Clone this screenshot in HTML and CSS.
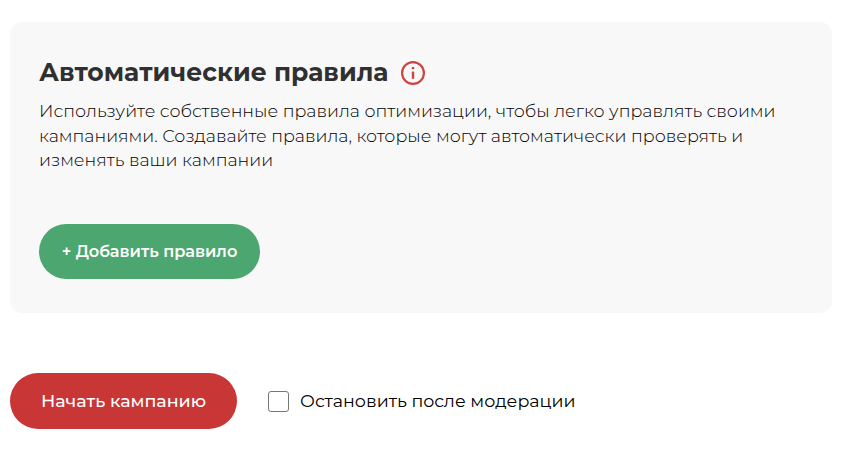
FILE: index.html
```html
<!DOCTYPE html>
<html lang="ru">
<head>
    <meta charset="UTF-8">
    <meta name="viewport" content="width=device-width, initial-scale=1.0">
    <title>Автоматические правила</title>
    <link rel="stylesheet" href="styles.css">
</head>
<body>
    <section class="rules">
        <div class="rules-header">
            <h2>Автоматические правила</h2>
            <svg class="info-icon" width="24" height="24" viewBox="0 0 24 24" fill="none">
                <circle cx="12" cy="12" r="10.9" stroke="#cd4444" stroke-width="2.2"/>
                <rect x="10.8" y="6" width="2.4" height="2.2" fill="#cd4444"/>
                <rect x="10.8" y="10.6" width="2.4" height="7.2" fill="#cd4444"/>
            </svg>
        </div>
        <p class="rules-text">
            Используйте собственные правила оптимизации, чтобы легко управлять своими<br>
            кампаниями. Создавайте правила, которые могут автоматически проверять и<br>
            изменять ваши кампании
        </p>
        <button class="add-btn">+ Добавить правило</button>
    </section>

    <div class="actions">
        <button class="start-btn">Начать кампанию</button>
        <label class="stop-label">
            <input type="checkbox" class="stop-checkbox">
            <span class="stop-text">Остановить после модерации</span>
        </label>
    </div>
</body>
</html>
```

FILE: styles.css
```css
body {
    font-family: 'Montserrat', 'Inter', sans-serif;
    background-color: #fff;
    margin: 0;
    padding: 22px 12px 0 10px;
    color: #000;
}

.rules {
    box-sizing: border-box;
    height: 291px;
    padding: 36px 29px 0;
    background-color: #f8f8f8;
    border-radius: 12px;
}

.rules-header {
    display: flex;
    align-items: center;
    gap: 13px;
    height: 30px;
}

h2 {
    margin: 0;
    padding-bottom: 2px;
    font-size: 25px;
    font-weight: 700;
    color: #303030;
    white-space: nowrap;
}

.info-icon {
    overflow: visible;
}

.rules-text {
    margin: 11px 0 0;
    font-size: 17.5px;
    font-weight: 300;
    line-height: 24.5px;
    color: #000;
    white-space: nowrap;
}

button {
    border: none;
    padding: 0;
    font-family: inherit;
    color: #fff;
    cursor: pointer;
    white-space: nowrap;
}

.add-btn {
    display: block;
    width: 221px;
    height: 55px;
    margin-top: 51px;
    border-radius: 28px;
    background-color: #4ba670;
    font-size: 16.2px;
    font-weight: 600;
}

.actions {
    display: flex;
    align-items: center;
    gap: 31px;
    margin-top: 60px;
}

.start-btn {
    width: 227px;
    height: 56px;
    padding-bottom: 2px;
    border-radius: 28px;
    background-color: #c83636;
    font-size: 17.5px;
    font-weight: 500;
}

.stop-label {
    display: flex;
    align-items: center;
    gap: 11px;
    font-size: 17.5px;
    white-space: nowrap;
}

.stop-text {
    padding-bottom: 2px;
}

.stop-checkbox {
    appearance: none;
    box-sizing: border-box;
    width: 21px;
    height: 21px;
    margin: 0;
    border: 1px solid #767676;
    border-radius: 3px;
    background-color: #fff;
}
```
